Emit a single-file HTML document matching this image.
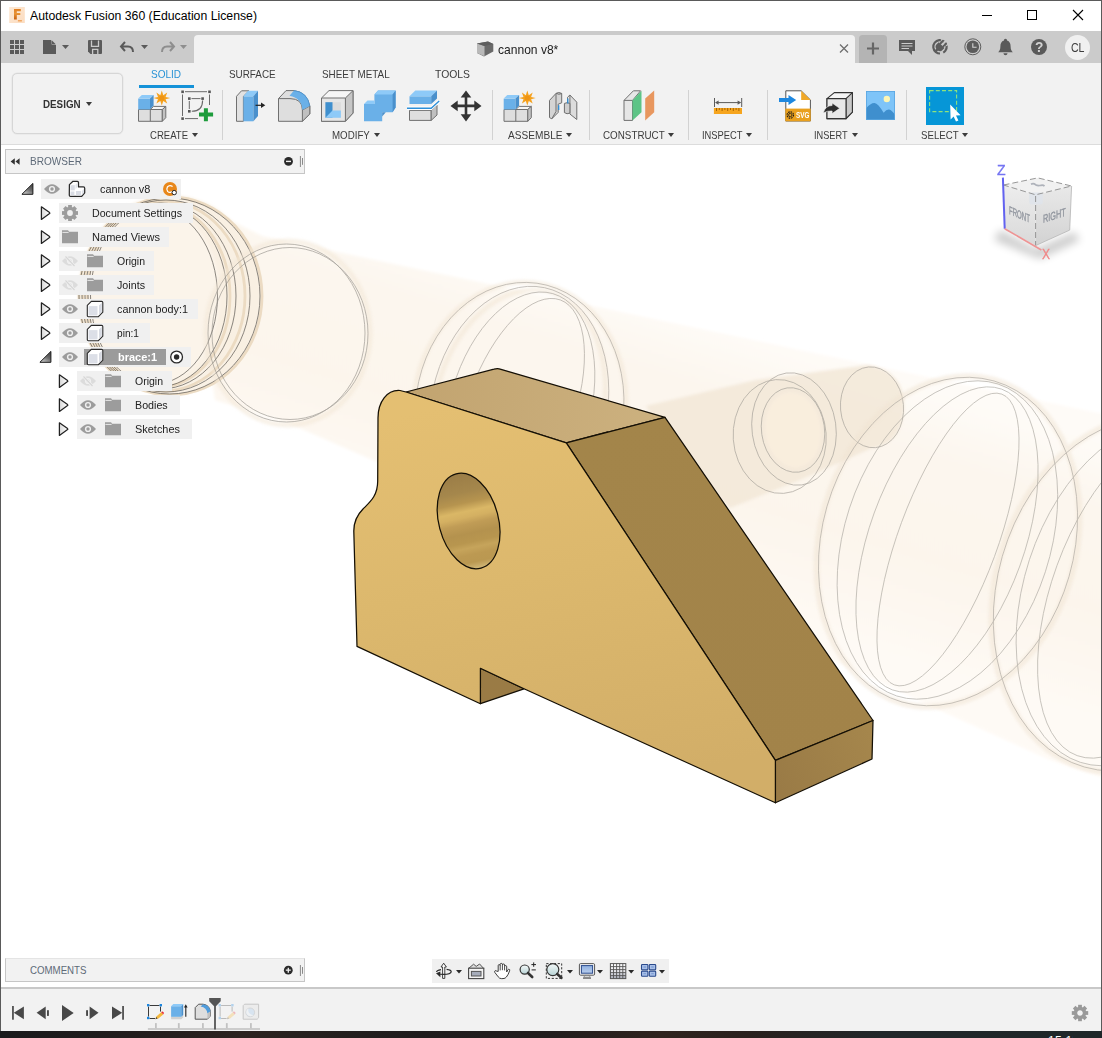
<!DOCTYPE html>
<html><head><meta charset="utf-8"><title>Autodesk Fusion 360</title>
<style>
html,body{margin:0;padding:0;width:1102px;height:1038px;overflow:hidden;background:#fff;}
body{font-family:"Liberation Sans",sans-serif;position:relative;}
.abs{position:absolute;}
.t{position:absolute;white-space:pre;line-height:16px;height:16px;transform-origin:0 50%;font-family:"Liberation Sans",sans-serif;}
svg{position:absolute;overflow:visible;}
.row{position:absolute;height:20px;background:#f0f0f0;}
.sep{position:absolute;width:1px;background:#d2d2d2;top:90px;height:50px;}
.dd{position:absolute;width:0;height:0;border-left:3px solid transparent;border-right:3px solid transparent;border-top:4px solid #3c3c3c;}
</style></head><body>
<!-- title bar -->
<div class="abs" style="left:0;top:0;width:1102px;height:31px;background:#fff;"></div>
<!-- app icon -->
<svg style="left:9px;top:7px" width="16" height="16" viewBox="0 0 16 16">
  <defs><linearGradient id="fi" x1="0" y1="0" x2="1" y2="1"><stop offset="0" stop-color="#fde9d5"/><stop offset="1" stop-color="#fbdcc0"/></linearGradient>
  <linearGradient id="ff" x1="0" y1="0" x2="0" y2="1"><stop offset="0" stop-color="#e07f24"/><stop offset=".45" stop-color="#e99436"/><stop offset="1" stop-color="#c8600f"/></linearGradient></defs>
  <rect x="0.200" y="0" width="15.600" height="16" fill="url(#fi)"/>
  <path d="M5 1.900H11.800V4.300H7.800V5.900H11.300V8.100H7.800V12.400H5Z" fill="url(#ff)"/>
  <rect x="8.900" y="13" width="4" height="1.500" fill="#f2a862"/>
</svg>
<span class="t" style="left:30px;top:7.5px;font-size:12px;font-weight:400;color:#000;transform:scaleX(1.0219);">Autodesk Fusion 360 (Education License)</span>
<!-- window controls -->
<svg style="left:0;top:0" width="1102" height="31" viewBox="0 0 1102 31">
  <path d="M982 15.5H992" stroke="#000" stroke-width="1" fill="none"/>
  <rect x="1027.5" y="10.5" width="9" height="9" stroke="#000" stroke-width="1" fill="none"/>
  <path d="M1073 10L1083 20M1083 10L1073 20" stroke="#000" stroke-width="1.1" fill="none"/>
</svg>
<!-- quick access bar -->
<div class="abs" style="left:0;top:31px;width:1102px;height:32px;background:#cbcbcb;"></div>
<!-- document tab -->
<div class="abs" style="left:194px;top:35px;width:661px;height:28px;background:#f2f2f2;border-radius:4px 4px 0 0;"></div>
<!-- ribbon background -->
<div class="abs" style="left:0;top:63px;width:1102px;height:81px;background:#f2f2f2;"></div>
<div class="abs" style="left:0;top:144px;width:1102px;height:1px;background:#dcdcdc;"></div>
<!-- canvas -->
<div class="abs" style="left:0;top:145px;width:1102px;height:842px;background:#fff;"></div>
<!-- 3D canvas -->
<svg style="left:0;top:0" width="1102" height="1038" viewBox="0 0 1102 1038">
<defs>
  <filter id="soft" x="-5%" y="-5%" width="110%" height="110%"><feGaussianBlur stdDeviation="1.6"/></filter>
  <clipPath id="cv"><rect x="1" y="145" width="1100" height="842"/></clipPath>
  <linearGradient id="gFront" gradientUnits="userSpaceOnUse" x1="470" y1="400" x2="560" y2="800">
    <stop offset="0" stop-color="#e4bf72"/><stop offset=".45" stop-color="#dcb86d"/><stop offset="1" stop-color="#d2ae68"/>
  </linearGradient>
  <linearGradient id="gTop" gradientUnits="userSpaceOnUse" x1="410" y1="400" x2="660" y2="420">
    <stop offset="0" stop-color="#c2a470"/><stop offset="1" stop-color="#ccb17f"/>
  </linearGradient>
  <linearGradient id="gSlope" gradientUnits="userSpaceOnUse" x1="600" y1="430" x2="830" y2="760">
    <stop offset="0" stop-color="#a3854a"/><stop offset="1" stop-color="#a28349"/>
  </linearGradient>
  <linearGradient id="gEnd" gradientUnits="userSpaceOnUse" x1="776" y1="780" x2="873" y2="740">
    <stop offset="0" stop-color="#9a7b46"/><stop offset="1" stop-color="#a5864c"/>
  </linearGradient>
  <linearGradient id="gHole" gradientUnits="userSpaceOnUse" x1="462" y1="473" x2="474.4" y2="568.5" gradientTransform="rotate(10 468.6 521)">
    <stop offset="0" stop-color="#9b7d47"/><stop offset=".2" stop-color="#a5874c"/><stop offset=".31" stop-color="#b6944f"/><stop offset=".4" stop-color="#dab766"/>
    <stop offset=".46" stop-color="#d4b062"/><stop offset=".53" stop-color="#c09c56"/><stop offset=".63" stop-color="#b4924e"/><stop offset=".72" stop-color="#b8964f"/>
    <stop offset=".78" stop-color="#c6a45b"/><stop offset=".85" stop-color="#bc9952"/><stop offset=".93" stop-color="#ba9851"/><stop offset="1" stop-color="#d0b676"/>
  </linearGradient>
  <linearGradient id="gBand" gradientUnits="userSpaceOnUse" x1="640" y1="300" x2="560" y2="560">
    <stop offset="0" stop-color="#fefbf7"/><stop offset=".25" stop-color="#fcf6ee"/><stop offset=".6" stop-color="#fcf5ec"/><stop offset="1" stop-color="#fefaf5"/>
  </linearGradient>
</defs>
<g clip-path="url(#cv)">
  <!-- ghost cannon body band -->
  <g id="ghost">
  <!-- band -->
  <g filter="url(#soft)">
  <path d="M185 197 L262 236 L1110 415.500 L1110 780 L1050 760 L950 715 L850 668 L290 424 L215 400 Z" fill="url(#gBand)"/>
  <!-- muzzle -->
  <ellipse cx="170" cy="295" rx="92" ry="100" fill="#f8eee1" opacity=".85"/>
  <ellipse cx="156" cy="296" rx="64" ry="88" fill="#fbf4ea"/>
  </g>
  <g fill="none" stroke="#ead9bf" stroke-width="2.8" opacity=".9">
    <ellipse cx="170.5" cy="296" rx="91.5" ry="99"/>
    <ellipse cx="164" cy="296" rx="81" ry="95"/>
    <ellipse cx="158.500" cy="296" rx="71.500" ry="91.500"/>
  </g>
  <g fill="none" stroke="#55524d" stroke-width=".8" opacity=".85">
    <ellipse cx="169.5" cy="296" rx="90.5" ry="98"/>
    <ellipse cx="166" cy="296" rx="84" ry="96"/>
    <ellipse cx="160.5" cy="296" rx="75.5" ry="93"/>
    <ellipse cx="157.5" cy="296" rx="69.5" ry="91"/>
    <ellipse cx="154" cy="296" rx="63.5" ry="88"/>
  </g>
  <!-- ring 2 -->
  <ellipse cx="288" cy="333" rx="82" ry="92" fill="none" stroke="#f3e7d6" stroke-width="5" opacity=".55" filter="url(#soft)"/>
  <g fill="none" stroke="#8f8b85" stroke-width=".8" opacity=".75">
    <ellipse cx="286.5" cy="333" rx="78.5" ry="89"/>
    <ellipse cx="290" cy="333.500" rx="78" ry="86"/>
  </g>
  <!-- ring 3 -->
  <g fill="none" stroke="#f1e4d2" stroke-width="5" opacity=".5" filter="url(#soft)">
    <ellipse cx="519.5" cy="408" rx="106" ry="126" transform="rotate(8 519.5 408)"/>
    <ellipse cx="519" cy="408" rx="84" ry="120" transform="rotate(14 519 408)"/>
  </g>
  <g fill="none" stroke="#a29d96" stroke-width=".8" opacity=".7">
    <ellipse cx="519.5" cy="408" rx="104" ry="126" transform="rotate(8 519.5 408)"/>
    <ellipse cx="519" cy="408" rx="88" ry="123" transform="rotate(12 519 408)"/>
    <ellipse cx="520" cy="408" rx="70" ry="119" transform="rotate(16 520 408)"/>
    <ellipse cx="521" cy="408" rx="53" ry="115" transform="rotate(20 521 408)"/>
  </g>
  <!-- pin ghost -->
  <g filter="url(#soft)">
  <path d="M646 406 L756 380 L868 365 Q905 371 904 408 Q902 444 872 448 L800 480 L730 508 L690 470 Z" fill="#f2e7d7" opacity=".85"/>
  <ellipse cx="793" cy="430" rx="28" ry="38" transform="rotate(-8 793 430)" fill="#fdf2df" opacity=".5"/>
  </g>
  <g fill="none" stroke="#a39e97" stroke-width=".8" opacity=".8">
    <ellipse cx="779.7" cy="436.5" rx="46.5" ry="57" transform="rotate(-4 779.7 436.5)"/>
    <ellipse cx="794" cy="429" rx="42" ry="56.5" transform="rotate(-8 794 429)"/>
    <ellipse cx="793" cy="430" rx="31.500" ry="42.500" transform="rotate(-8 793 430)"/>
    <ellipse cx="872" cy="407.3" rx="31.5" ry="40.5" transform="rotate(-5 872 407.3)"/>
  </g>
  <!-- breech rings -->
  <g fill="none" stroke="#f0e3d1" stroke-width="6" opacity=".5" filter="url(#soft)">
    <ellipse cx="948" cy="541.5" rx="128" ry="168" transform="rotate(16 948 541.5)"/>
    <ellipse cx="1134" cy="594" rx="139" ry="181" transform="rotate(16 1134 594)"/>
  </g>
  <g fill="none" stroke="#a6a29b" stroke-width=".8" opacity=".7">
    <ellipse cx="948" cy="541.5" rx="126" ry="167" transform="rotate(16 948 541.5)"/>
    <ellipse cx="947.4" cy="540" rx="103" ry="164" transform="rotate(18 947.4 540)"/>
    <ellipse cx="947" cy="539.5" rx="77.5" ry="160" transform="rotate(20 947 539.5)"/>
    <ellipse cx="948" cy="539.5" rx="49.5" ry="155" transform="rotate(20.3 948 539.5)"/>
    <ellipse cx="1134" cy="594" rx="137" ry="180" transform="rotate(16 1134 594)"/>
    <ellipse cx="1135" cy="594" rx="111" ry="177" transform="rotate(18 1135 594)"/>
    <ellipse cx="1136" cy="594" rx="84" ry="172" transform="rotate(20 1136 594)"/>
  </g>
  </g>
  <!-- BRACE -->
  <g stroke="#140f05" stroke-width="1.25" stroke-linejoin="round">
    <!-- top face -->
    <path d="M406 392 L494 369.2 Q497.5 368.2 501 369.3 L665 417.3 L566.3 442.8 Z" fill="url(#gTop)"/>
    <!-- slope face -->
    <path d="M566.3 442.8 L665 417.3 L873 720.5 L775.4 760.4 Z" fill="url(#gSlope)"/>
    <!-- end face -->
    <path d="M775.4 760.4 L873 720.5 L872 759 L775.4 802.8 Z" fill="url(#gEnd)"/>
    <!-- notch inner -->
    <path d="M480.4 668.3 L524 688.8 L480.4 703.7 Z" fill="#9a7b45"/>
    <!-- front face -->
    <path d="M406 392 L566.3 442.8 L775.4 760.4 L775.4 802.8 L524 688.8 L480.4 668.3 L480.4 703.7 L357 646.4 L353.8 531
             C353.8 521 357.5 514.5 363 509 C370 502 377.7 496 377.7 481 L378 418 C378 402 387 389.5 400 390.5 Z" fill="url(#gFront)"/>
    <!-- hole -->
    <ellipse cx="468.6" cy="521" rx="29.8" ry="48.7" transform="rotate(-14.8 468.6 521)" fill="url(#gHole)"/>
  </g>
</g>
</svg>
<!-- view cube -->
<svg style="left:0;top:0" width="1102" height="300" viewBox="0 0 1102 300">
  <defs>
    <filter id="vb" x="-50%" y="-50%" width="200%" height="200%"><feGaussianBlur stdDeviation="4"/></filter>
    <linearGradient id="vcF" x1="0" y1="0" x2="0" y2="1"><stop offset="0" stop-color="#ededed"/><stop offset="1" stop-color="#d9d9d9"/></linearGradient>
    <linearGradient id="vcR" x1="0" y1="0" x2="0" y2="1"><stop offset="0" stop-color="#e9e9e9"/><stop offset="1" stop-color="#d2d2d2"/></linearGradient>
  </defs>
  <path d="M1000 230L1036 249L1074 232L1080 240L1040 259L994 240Z" fill="#000" opacity=".2" filter="url(#vb)"/>
  <path d="M1003.5 185L1037.8 177.9L1071.6 186L1035.6 194.8Z" fill="#f1f1f1"/>
  <path d="M1003.5 185L1035.6 194.8V245.6L1004.7 228.7Z" fill="url(#vcF)"/>
  <path d="M1035.6 194.8L1071.6 186L1069.7 230.1L1035.6 245.6Z" fill="url(#vcR)"/>
  <rect x="1029.2" y="192.4" width="13.6" height="12" rx="2.5" fill="#dfe3ea" opacity=".9"/>
  <g fill="none" stroke="#8c8c8c" stroke-width=".9" stroke-dasharray="6 3">
    <path d="M1003.5 185L1037.8 177.9L1071.6 186L1035.6 194.8Z"/>
    <path d="M1035.6 196V245.6"/>
  </g>
  <path d="M1071.6 186L1069.7 230.1L1035.6 245.6" fill="none" stroke="#b4b4b4" stroke-width=".8"/>
  <path d="M1031 184.2q2.500-1.400 4.500 .5q2.500 1.500 5.500 .6q2.200-.5 3.500 .9" fill="none" stroke="#aeb2ba" stroke-width="1.7"/>
  <path d="M1002.9 177.6L1004.7 228.7" stroke="#6262f0" stroke-width="2"/>
  <path d="M1004.7 228.7L1041.4 250" stroke="#ee9494" stroke-width="1.6"/>
</svg>
<span class="t" style="left:1008.9px;top:201.5px;font-size:11.5px;color:#8f949d;-webkit-text-stroke:.35px #8f949d;transform-origin:0 50%;transform:matrix(0.528,0.222,0,1,0,0);">FRONT</span>
<span class="t" style="left:1042.8px;top:210.5px;font-size:11.5px;color:#8f949d;-webkit-text-stroke:.35px #8f949d;transform-origin:0 50%;transform:matrix(0.634,-0.203,0,1,0,0);">RIGHT</span>
<span class="t" style="left:997.4px;top:162.2px;font-size:14px;font-weight:400;color:#7474f2;transform:scaleX(1.0044);-webkit-text-stroke:.35px #7474f2;">Z</span>
<span class="t" style="left:1042.2px;top:245.6px;font-size:14px;font-weight:400;color:#f08686;transform:scaleX(0.8562);-webkit-text-stroke:.3px #f08686;">X</span>
<!-- quick access toolbar icons -->
<svg style="left:0;top:31px" width="1102" height="32" viewBox="0 31 1102 32">
  <!-- grid (data panel) -->
  <g fill="#5a5a5a">
    <rect x="10" y="40" width="4" height="4"/><rect x="15" y="40" width="4" height="4"/><rect x="20" y="40" width="4" height="4"/>
    <rect x="10" y="45" width="4" height="4"/><rect x="15" y="45" width="4" height="4"/><rect x="20" y="45" width="4" height="4"/>
    <rect x="10" y="50" width="4" height="4"/><rect x="15" y="50" width="4" height="4"/><rect x="20" y="50" width="4" height="4"/>
  </g>
  <!-- file -->
  <path d="M43 40H51L56 45V54H43Z" fill="#5a5a5a"/><path d="M51.6 39.6V44.4H56.4Z" fill="#cbcbcb"/><path d="M52 40.5L55.5 44H52Z" fill="#5a5a5a"/>
  <path d="M62 45H69L65.5 49Z" fill="#5a5a5a"/>
  <!-- save -->
  <path d="M89 40H101Q102 40 102 41V53Q102 54 101 54H90.5L88 51.5V41Q88 40 89 40Z" fill="#5a5a5a"/>
  <path d="M91.5 40.6V46.3H98.5V40.6" fill="none" stroke="#cbcbcb" stroke-width="1.3"/>
  <path d="M92.6 54V49.3H97.8V54" fill="none" stroke="#cbcbcb" stroke-width="1.3"/>
  <!-- undo -->
  <path d="M125 42L121 46.5L125 51M121.5 46.5H128Q133 46.5 133 52" fill="none" stroke="#5a5a5a" stroke-width="2"/>
  <path d="M141 45H148L144.5 49Z" fill="#5a5a5a"/>
  <!-- redo (disabled) -->
  <path d="M170 42L174 46.5L170 51M173.5 46.5H167Q162 46.5 162 52" fill="none" stroke="#8e8e8e" stroke-width="2"/>
  <path d="M180 45H187L183.5 49Z" fill="#8e8e8e"/>
  <!-- doc tab icon (cube) -->
  <path d="M477 43.5L488 41.5L493.3 44V51.5L484 56.5L477 53Z" fill="#6a6a6a"/>
  <path d="M477 43.5L484.5 46V56.3L477 53Z" fill="#b9b9b9"/>
  <path d="M477 43.5L488 41.5L493.3 44L484.5 46Z" fill="#5e5e5e"/>
  <!-- tab close x -->
  <path d="M840 44.5L848 52.5M848 44.5L840 52.5" stroke="#6e6e6e" stroke-width="1.3" fill="none"/>
  <!-- new tab + -->
  <rect x="859" y="35" width="28" height="28" rx="3.5" fill="#b4b4b4"/><rect x="859" y="55" width="28" height="8" fill="#b4b4b4"/>
  <path d="M867 48.5H879M873 42.5V54.5" stroke="#666" stroke-width="2.2" fill="none"/>
  <!-- comment -->
  <path d="M899 40H915V51H912V55L908 51H899Z" fill="#5a5a5a"/>
  <path d="M901.5 43.5H912.5M901.5 46H912.5M901.5 48.5H909" stroke="#cbcbcb" stroke-width="1" fill="none"/>
  <!-- job status -->
  <circle cx="940" cy="46.8" r="6.7" fill="none" stroke="#5c5c5c" stroke-width="2.2" stroke-dasharray="34 3.4 100" transform="rotate(128 940 46.8)"/>
  <g transform="translate(940.2 46.6) rotate(45)" fill="#5c5c5c">
    <path d="M-4.1 -2H4.1V1.2Q4.1 4.4 0 4.4Q-4.1 4.4 -4.1 1.2Z"/>
    <rect x="-3" y="-6.2" width="1.9" height="4.6"/><rect x="1.1" y="-6.2" width="1.9" height="4.6"/>
    <rect x="-1.3" y="3.6" width="2.6" height="3.6"/>
  </g>
  <g transform="translate(940.2 46.6) rotate(45)" fill="#cbcbcb">
    <rect x="-4.4" y="-8.2" width="1.3" height="3.4"/><rect x="-1" y="-8.6" width="2" height="3.6"/><rect x="3.1" y="-8.2" width="1.3" height="3.4"/>
  </g>
  <!-- clock -->
  <circle cx="972.8" cy="46.8" r="8" fill="none" stroke="#5c5c5c" stroke-width="1"/>
  <circle cx="972.8" cy="46.8" r="6.3" fill="#5c5c5c"/>
  <path d="M972.8 43.2V47.3H976.6" stroke="#d4d4d4" stroke-width="1.1" fill="none"/>
  <!-- bell -->
  <path d="M1005.5 38.8C1006.6 38.8 1007 39.6 1007 40.4C1009.6 41.2 1010.6 43.4 1010.6 46.2C1010.6 49.6 1011.6 51 1012.8 52.2H998.2C999.4 51 1000.4 49.6 1000.4 46.2C1000.4 43.4 1001.4 41.2 1004 40.4C1004 39.6 1004.4 38.8 1005.5 38.8Z" fill="#5a5a5a"/>
  <path d="M1003.5 53.3H1007.5C1007.5 54.6 1006.6 55.3 1005.5 55.3C1004.4 55.3 1003.5 54.6 1003.5 53.3Z" fill="#5a5a5a"/>
  <!-- help -->
  <circle cx="1039" cy="47" r="8" fill="#5a5a5a"/>
  <!-- avatar -->
  <circle cx="1077.5" cy="47.5" r="12.5" fill="#f0f0f0"/>
</svg>
<span class="t" style="left:1034.6px;top:38.9px;font-size:15px;font-weight:700;color:#d2d2d2;transform:scaleX(0.9158);">?</span>
<span class="t" style="left:1071px;top:39.8px;font-size:12px;font-weight:400;color:#3c3c3c;transform:scaleX(0.8798);">CL</span>
<span class="t" style="left:497.5px;top:41.5px;font-size:13px;font-weight:400;color:#222;transform:scaleX(0.9268);">cannon v8*</span>
<!-- ribbon: workspace button, tabs, labels -->
<div class="abs" style="left:12px;top:73px;width:111px;height:61px;border:1px solid #d6d6d6;box-shadow:0 0 0 .5px #e4e4e4;border-radius:5px;box-sizing:border-box;background:#f2f2f2;"></div>
<span class="t" style="left:43.4px;top:96.1px;font-size:11px;font-weight:700;color:#333;transform:scaleX(0.8913);">DESIGN</span>
<div class="dd" style="left:86px;top:102px;"></div>
<span class="t" style="left:151.2px;top:66.1px;font-size:11px;font-weight:400;color:#2a93d5;transform:scaleX(0.9117);">SOLID</span>
<div class="abs" style="left:139px;top:85px;width:55px;height:3px;background:#1592d8;"></div>
<span class="t" style="left:229px;top:66.1px;font-size:11px;font-weight:400;color:#3c3c3c;transform:scaleX(0.8986);">SURFACE</span>
<span class="t" style="left:322px;top:66.1px;font-size:11px;font-weight:400;color:#3c3c3c;transform:scaleX(0.8980);">SHEET METAL</span>
<span class="t" style="left:434.8px;top:66.1px;font-size:11px;font-weight:400;color:#3c3c3c;transform:scaleX(0.9436);">TOOLS</span>
<span class="t" style="left:150.3px;top:126.9px;font-size:11px;font-weight:400;color:#3c3c3c;transform:scaleX(0.8696);">CREATE</span><div class="dd" style="left:192px;top:133px;"></div>
<span class="t" style="left:332.1px;top:126.9px;font-size:11px;font-weight:400;color:#3c3c3c;transform:scaleX(0.8836);">MODIFY</span><div class="dd" style="left:374px;top:133px;"></div>
<span class="t" style="left:508.1px;top:126.9px;font-size:11px;font-weight:400;color:#3c3c3c;transform:scaleX(0.9189);">ASSEMBLE</span><div class="dd" style="left:566px;top:133px;"></div>
<span class="t" style="left:603.4px;top:126.9px;font-size:11px;font-weight:400;color:#3c3c3c;transform:scaleX(0.8934);">CONSTRUCT</span><div class="dd" style="left:668px;top:133px;"></div>
<span class="t" style="left:702.1px;top:126.9px;font-size:11px;font-weight:400;color:#3c3c3c;transform:scaleX(0.8493);">INSPECT</span><div class="dd" style="left:746px;top:133px;"></div>
<span class="t" style="left:814.3px;top:126.9px;font-size:11px;font-weight:400;color:#3c3c3c;transform:scaleX(0.8371);">INSERT</span><div class="dd" style="left:852px;top:133px;"></div>
<span class="t" style="left:921.3px;top:126.9px;font-size:11px;font-weight:400;color:#3c3c3c;transform:scaleX(0.8786);">SELECT</span><div class="dd" style="left:962px;top:133px;"></div>
<div class="sep" style="left:222px"></div><div class="sep" style="left:492px"></div><div class="sep" style="left:589px"></div>
<div class="sep" style="left:688px"></div><div class="sep" style="left:767px"></div><div class="sep" style="left:906px"></div>
<!-- ribbon icons A -->
<svg style="left:0;top:0" width="1102" height="145" viewBox="0 0 1102 145">
<defs>
  <g id="newcomp">
    <!-- gray cubes -->
    <path d="M138.5 109.5H162.3V121.3H138.5Z" fill="#dedede" stroke="#707070" stroke-width="1"/>
    <path d="M150.3 109.5V121.3" stroke="#707070" stroke-width="1"/>
    <path d="M150.3 109.5L153.6 106.4H165.8L162.3 109.5Z" fill="#f6f6f6" stroke="#707070" stroke-width="1" stroke-linejoin="round"/>
    <path d="M162.3 109.5L165.8 106.4V117.7L162.3 121.3Z" fill="#c2c2c2" stroke="#707070" stroke-width="1" stroke-linejoin="round"/>
    <!-- blue cube -->
    <path d="M138.2 98.6H150V109.5H138.2Z" fill="#6ab0e8"/>
    <path d="M138.2 98.6L141.8 95H153.6L150 98.6Z" fill="#8ecaf8"/>
    <path d="M150 98.6L153.6 95V105.5L150 109.5Z" fill="#4a90cc"/>
    <!-- star -->
    <path d="M161.8 90.6L163.3 95.2L167.2 92.6L165.6 96.9L170.2 98L165.6 99.2L167.2 103.4L163.3 100.9L161.8 105.4L160.3 100.9L156.4 103.4L158 99.2L153.4 98L158 96.9L156.4 92.6L160.3 95.2Z" fill="#f5a21f"/>
    <circle cx="161.8" cy="98" r="2.6" fill="#ee9414"/>
  </g>
</defs>
<use href="#newcomp"/>
<use href="#newcomp" x="365.5"/>
<!-- create sketch -->
<g fill="none" stroke="#6a6a6a" stroke-width="1">
  <path d="M185 91.7H207M182.5 94.5V116M209.5 94.5V105M185 118.6H198"/>
  <path d="M191.5 98.6H200.5M189.3 101V109"/>
  <path d="M202.6 100.5Q202.6 111.3 191.8 111.3" stroke-width="1.1"/>
</g>
<g fill="#555">
  <rect x="181.3" y="90.5" width="2.6" height="2.6"/><rect x="208.2" y="90.5" width="2.6" height="2.6"/><rect x="181.3" y="117.3" width="2.6" height="2.6"/>
  <rect x="188" y="97.3" width="2.6" height="2.6"/><rect x="201.3" y="97.3" width="2.6" height="2.6"/><rect x="188" y="110" width="2.6" height="2.6"/>
</g>
<path d="M203.9 108.2H207.9V112.6H213.1V116.6H207.9V121.3H203.9V116.6H199V112.6H203.9Z" fill="#1e9c3c"/>
<!-- press pull -->
<path d="M236.5 96.3L241.5 90.8H249L243.4 96.3V121.3H236.5Z" fill="#e2e2e2" stroke="#707070" stroke-width="1" stroke-linejoin="round"/>
<path d="M243.4 96.3H253.4V121.3H243.4Z" fill="#6ab0e8"/>
<path d="M243.4 96.3L248 90.8H258L253.4 96.3Z" fill="#8ecaf8"/>
<path d="M253.4 96.3L258 90.8V115.9L253.4 121.3Z" fill="#4a90cc"/>
<path d="M255.5 105.3H262" stroke="#222" stroke-width="1.2"/><path d="M261 102.6L265.3 105.3L261 108Z" fill="#222"/>
<!-- fillet -->
<path d="M278.5 98.6L286 90.6H294Q307 92 309.8 106V114L302.4 121.3H278.5Z" fill="#dedede" stroke="#707070" stroke-width="1" stroke-linejoin="round"/>
<path d="M302.4 110L309.8 106V114L302.4 121.3Z" fill="#c0c0c0" stroke="#707070" stroke-width="1" stroke-linejoin="round"/>
<path d="M278.5 98.6H290Q302.4 98.6 302.4 110" fill="none" stroke="#707070" stroke-width="1"/>
<path d="M289.5 95.8L294 90.6Q307.5 92 309.8 106L302.4 110Q301.5 98 289.5 95.8Z" fill="#6ab0e8"/>
<path d="M294 90.6Q307.5 92 309.8 106" fill="none" stroke="#4a90cc" stroke-width=".8"/>
<!-- shell -->
<path d="M321.5 98L329 90.6H353V113.1L345.4 121.3H321.5Z" fill="#f6f6f6" stroke="#707070" stroke-width="1" stroke-linejoin="round"/>
<path d="M345.4 98L353 90.6V113.1L345.4 121.3Z" fill="#c6c6c6" stroke="#707070" stroke-width="1" stroke-linejoin="round"/>
<path d="M321.5 98H345.4V121.3H321.5Z" fill="#e6e6e6" stroke="#707070" stroke-width="1"/>
<path d="M325.4 102.2H340.9V117.7H325.4Z" fill="#dcdcdc"/>
<path d="M325.4 102.2H332.5V117.7H325.4Z" fill="#3f8fce"/>
<path d="M332.5 110.5H340.9V117.7H325.4Z" fill="#8ecaf8"/>
<!-- combine -->
<path d="M374.4 94.4L378 90.4H395.6V107.6L392.6 112.2H382.2V121.3H364V104H374.4Z" fill="#6ab0e8"/>
<path d="M374.4 94.4L378 90.4H395.6L392.6 94.4Z" fill="#8ecaf8"/>
<path d="M364 104L367.5 100.4H374.4V104Z" fill="#8ecaf8"/>
<path d="M392.6 94.4L395.6 90.4V107.6L392.6 112.2Z" fill="#4a90cc"/>
<path d="M382.2 112.2H385.8L382.2 116.5Z" fill="#4a90cc"/>
<path d="M382.2 112.2L385.3 108.4V112.2Z" fill="#4a90cc" opacity="0"/>
<!-- split body -->
<path d="M409.5 96.3H431.2V104H409.5Z" fill="#6ab0e8"/>
<path d="M409.5 96.3L415.3 90.4H437L431.2 96.3Z" fill="#8ecaf8"/>
<path d="M431.2 96.3L437 90.4V98.6L431.2 104Z" fill="#4a90cc"/>
<path d="M409.5 110.4H431.2V120.4H409.5Z" fill="#dedede" stroke="#707070" stroke-width="1"/>
<path d="M431.2 110.4L437 105V115L431.2 120.4Z" fill="#c0c0c0" stroke="#707070" stroke-width="1" stroke-linejoin="round"/>
<path d="M407 108.2H431.2L439.2 101" fill="none" stroke="#fff" stroke-width="3.4"/>
<path d="M407 108.2H431.2L439.2 101" fill="none" stroke="#2e8fd8" stroke-width="1.4"/>
<!-- move -->
<path d="M466 90.4L471.3 97.6H467.3V104.6H474.3V100.6L481.5 105.9L474.3 111.2V107.2H467.3V114.2H471.3L466 121.4L460.7 114.2H464.7V107.2H457.7V111.2L450.5 105.9L457.7 100.6V104.6H464.7V97.6H460.7Z" fill="#333"/>
</svg>
<!-- ribbon icons B -->
<svg style="left:0;top:0" width="1102" height="145" viewBox="0 0 1102 145">
<!-- joint -->
<g stroke="#6e6e6e" stroke-width="1" stroke-linejoin="round">
  <path d="M549.5 100.4L556 93.4Q558.8 91.6 561.7 93.4V102.8L558.2 104.2V112.4L551.8 118.8L549.5 117.6Z" fill="#d4d4d4"/>
  <path d="M556 93.4V111.5L551.8 118.8" fill="none"/>
  <path d="M556.3 93.4Q558.8 95 561.6 93.6" fill="none"/>
  <path d="M569.9 95L576.8 102.2V119.5L569.9 114Z" fill="#dcdcdc"/>
  <path d="M564.4 103.4Q567 102 569.9 103.4V113.1Q567 114.6 564.4 112.6Z" fill="#cfcfcf"/>
  <path d="M569.9 95L567.6 97.2V103" fill="none"/>
</g>
<path d="M558.7 105.2V110M567.8 98.4V103.6" stroke="#2e8fd8" stroke-width="1.3"/>
<!-- construct: offset plane -->
<path d="M624 100.4L633.4 90.8H640.6L632.5 100.4V120.4H624Z" fill="#e6e6e6" stroke="#707070" stroke-width="1" stroke-linejoin="round"/>
<path d="M624 100.4H632.5" stroke="#707070" stroke-width="1"/>
<path d="M632.5 100.4L641.5 90.8V112.2L632.5 120.4Z" fill="#5dc486"/>
<path d="M645.2 98.6L654.2 90.4V112.2L645.2 120.4Z" fill="#e8975f"/>
<!-- inspect: measure -->
<path d="M714.5 98V107M741.7 98V107M716 102.6H740" stroke="#5a5a5a" stroke-width="1" fill="none"/>
<path d="M715 102.6L718.6 100.4V104.8ZM741.2 102.6L737.6 100.4V104.8Z" fill="#5a5a5a"/>
<rect x="713.9" y="108" width="28.1" height="6" fill="#f6a51e"/>
<path d="M716.5 108V111M719.3 108V110M722.1 108V111M724.9 108V110M727.7 108V111M730.5 108V110M733.3 108V111M736.1 108V110M738.9 108V111" stroke="#a86400" stroke-width="1"/>
<!-- insert svg -->
<path d="M785.8 90.8H801.2L810.4 99.9V121H785.8Z" fill="#fff" stroke="#555" stroke-width="1"/>
<path d="M801.2 90.8L810.7 99.9H801.2Z" fill="#f0a828"/>
<rect x="785.3" y="108.6" width="25.4" height="12.7" fill="#e9a01e"/>
<path d="M779 97.9H788.5V95L796.2 99.9L788.5 104.9V101.9H779Z" fill="#1e88e0"/>
<circle cx="790.3" cy="115" r="3.2" fill="none" stroke="#1a1a1a" stroke-width="1.1" stroke-dasharray="1.6 .9"/>
<circle cx="790.3" cy="115" r="1.7" fill="none" stroke="#1a1a1a" stroke-width=".8"/>
<!-- insert derive -->
<path d="M827 98.6L834.3 92.6H852.4V112.2L846 118.6H827Z" fill="#f4f4f4" stroke="#333" stroke-width="1.1" stroke-linejoin="round"/>
<path d="M846 98.6L852.4 92.6V112.2L846 118.6Z" fill="#c9c9c9" stroke="#333" stroke-width="1.1" stroke-linejoin="round"/>
<path d="M827 98.6H846V118.6H827Z" fill="#e8e8e8" stroke="#333" stroke-width="1.1"/>
<path d="M823.3 113Q825.4 105.4 832.1 105.5V103L839.7 108.3L832.1 113.6V111Q827 110.6 823.3 113Z" fill="#2e2e2e" stroke="#f2f2f2" stroke-width=".6"/>
<!-- insert image -->
<rect x="866" y="91" width="29" height="29" fill="#7ec4f8"/>
<path d="M866 108.6Q870.5 103 874.5 103.1Q878 103.4 883.6 112.8Q886.5 109.2 889 109.5Q892 110 895 115V120H866Z" fill="#3f8fce"/>
<circle cx="886.8" cy="99" r="3.2" fill="#fdf6b4"/>
<rect x="866.4" y="91.4" width="28.2" height="28.2" fill="none" stroke="#5aa6e0" stroke-width=".8"/>
<!-- select -->
<rect x="926" y="87" width="38" height="38" fill="#0696d7"/>
<rect x="929.6" y="90.6" width="27" height="21" fill="none" stroke="#8fe27c" stroke-width="1.1" stroke-dasharray="4 2.2"/>
<path d="M950.2 104.4L950.6 119.4L953.6 116.4L956 121.6L958.4 120.5L956 115.4L960.6 115.2Z" fill="#fff"/>
</svg>
<span class="t" style="left:796.2px;top:107.2px;font-size:8.5px;font-weight:700;color:#fff;transform:scaleX(0.7464);">SVG</span>
<!-- browser panel -->
<div class="abs" style="left:5px;top:149px;width:300px;height:25px;box-sizing:border-box;background:#f2f2f2;border:1px solid #c6c6c6;"></div>
<span class="t" style="left:30px;top:153.3px;font-size:11px;font-weight:400;color:#5e6a78;transform:scaleX(0.9148);">BROWSER</span>
<div class="row" style="left:41px;top:179px;width:140px;"></div>
<div class="row" style="left:59px;top:203px;width:133.5px;"></div>
<div class="row" style="left:59px;top:227px;width:110px;"></div>
<div class="row" style="left:59px;top:251px;width:95px;"></div>
<div class="row" style="left:59px;top:275px;width:95px;"></div>
<div class="row" style="left:59px;top:299px;width:139px;"></div>
<div class="row" style="left:59px;top:323px;width:91px;"></div>
<div class="row" style="left:59px;top:347px;width:132px;"></div>
<div class="row" style="left:77px;top:371px;width:95px;"></div>
<div class="row" style="left:77px;top:395px;width:103px;"></div>
<div class="row" style="left:77px;top:419px;width:115px;"></div>
<div class="abs" style="left:84px;top:349px;width:82px;height:16px;background:#9b9b9b;"></div>
<svg style="left:0;top:0" width="320" height="450" viewBox="0 0 320 450">
<defs>
  <linearGradient id="trg" x1="1" y1="0" x2=".35" y2="1"><stop offset="0" stop-color="#3a3a3a"/><stop offset=".55" stop-color="#6e6e6e"/><stop offset="1" stop-color="#c4c4c4"/></linearGradient><linearGradient id="tro" x1="0" y1="0" x2="1" y2="0"><stop offset="0" stop-color="#d8d8d8"/><stop offset="1" stop-color="#ffffff"/></linearGradient>
  <g id="eye"><path d="M0 0Q8 -9.4 16 0Q8 9.4 0 0Z" fill="#9c9c9c"/><circle cx="8" cy="0" r="3.1" fill="#f0f0f0"/><circle cx="8" cy="0" r="1.7" fill="#9c9c9c"/></g>
  <g id="eyeh"><path d="M0 0Q8 -9.4 16 0Q8 9.4 0 0Z" fill="#dcdcdc"/><circle cx="8" cy="0" r="3.1" fill="#f0f0f0"/><circle cx="8" cy="0" r="1.7" fill="#dcdcdc"/><path d="M3.5 -4.5L12.5 5" stroke="#f0f0f0" stroke-width="2.6"/><path d="M3.5 -4.5L12.5 5" stroke="#d6d6d6" stroke-width="1.1"/></g>
  <g id="folder"><path d="M0 -6.8H6L7.2 -5.2H16V6.2H0Z" fill="#9c9c9c"/><path d="M0.4 -4.6H6.6" stroke="#f0f0f0" stroke-width=".9"/></g>
  <g id="gear"><path id="gt" d="M-1.9 -8H1.9V-4.5H-1.9Z" fill="#9c9c9c"/><use href="#gt" transform="rotate(45)"/><use href="#gt" transform="rotate(90)"/><use href="#gt" transform="rotate(135)"/><use href="#gt" transform="rotate(180)"/><use href="#gt" transform="rotate(225)"/><use href="#gt" transform="rotate(270)"/><use href="#gt" transform="rotate(315)"/><circle r="4.6" fill="none" stroke="#9c9c9c" stroke-width="3.4"/></g>
  <g id="cube"><path d="M0.3 -3.6L4.3 -7.6H14.6Q15.8 -7.6 15.8 -6.4V3.2L11.4 7.7H1.5Q0.3 7.7 0.3 6.5Z" fill="#fff" stroke="#2a2a2a" stroke-width="1.1" stroke-linejoin="round"/><path d="M1.6 -2.9H10.5V6.4H1.6Z" fill="#dcdfe7"/><path d="M12 -3.4L14.8 -6.2V2.8L12 5.8Z" fill="#d7dae2"/></g>
  <g id="comp"><path d="M0.4 -4.4L4 -7.7H8.4Q9.5 -7.7 9.5 -6.6V-2.1H14.4Q15.7 -2.1 15.7 -0.8V3.8L12.7 7.4H1.5Q0.3 7.4 0.3 6.2Z" fill="#fff" stroke="#2a2a2a" stroke-width="1.25" stroke-linejoin="round"/><path d="M1.5 -3.8H5.8V1.4H1.5Z" fill="#d9dce4"/><path d="M1.5 2.5H5.4V6.4H1.5Z" fill="#d9dce4"/><path d="M6.9 2H12.1V6.400H6.900Z" fill="#d9dce4"/><path d="M6.5 -4L8.500 -6.400V-2.300L6.500 0.500Z" fill="#e2e5eb"/><path d="M13.1 2L14.900 -0.200V3.700L13.100 6Z" fill="#dcdfe6"/></g>
</defs>
<path d="M14.8 158.2V164.8L10.6 161.5ZM19.6 158.2V164.8L15.4 161.5Z" fill="#333"/>
<circle cx="288.5" cy="161.4" r="4.4" fill="#2a2a2a"/><path d="M286 161.4H291" stroke="#f2f2f2" stroke-width="1.4"/>
<path d="M300.4 156V167M302.5 158V164.8" stroke="#8a8a8a" stroke-width="1"/>
<path d="M32.9 183.4V194.3H21.9Z" fill="url(#trg)" stroke="#1a1a1a" stroke-width="1" stroke-linejoin="round"/>
<use href="#eye" x="44" y="189"/>
<use href="#comp" x="69" y="189"/>
<path d="M41.4 206.8L49.6 212.6Q50.1 213.1 49.6 213.6L41.4 219.4Z" fill="url(#tro)" stroke="#222" stroke-width="1.25" stroke-linejoin="round"/>
<use href="#gear" x="70" y="213"/>
<path d="M41.4 230.8L49.6 236.6Q50.1 237.1 49.6 237.6L41.4 243.4Z" fill="url(#tro)" stroke="#222" stroke-width="1.25" stroke-linejoin="round"/>
<use href="#folder" x="62" y="237"/>
<path d="M41.4 254.8L49.6 260.6Q50.1 261.1 49.6 261.6L41.4 267.4Z" fill="url(#tro)" stroke="#222" stroke-width="1.25" stroke-linejoin="round"/>
<use href="#eyeh" x="62" y="261"/>
<use href="#folder" x="87" y="261"/>
<path d="M41.4 278.8L49.6 284.6Q50.1 285.1 49.6 285.6L41.4 291.4Z" fill="url(#tro)" stroke="#222" stroke-width="1.25" stroke-linejoin="round"/>
<use href="#eyeh" x="62" y="285"/>
<use href="#folder" x="87" y="285"/>
<path d="M41.4 302.8L49.6 308.6Q50.1 309.1 49.6 309.6L41.4 315.4Z" fill="url(#tro)" stroke="#222" stroke-width="1.25" stroke-linejoin="round"/>
<use href="#eye" x="62" y="309"/>
<use href="#cube" x="87" y="309"/>
<path d="M41.4 326.8L49.6 332.6Q50.1 333.1 49.6 333.6L41.4 339.4Z" fill="url(#tro)" stroke="#222" stroke-width="1.25" stroke-linejoin="round"/>
<use href="#eye" x="62" y="333"/>
<use href="#cube" x="87" y="333"/>
<path d="M50.9 351.4V362.3H39.9Z" fill="url(#trg)" stroke="#1a1a1a" stroke-width="1" stroke-linejoin="round"/>
<use href="#eye" x="62" y="357"/>
<use href="#cube" x="87" y="357"/>
<path d="M59.4 374.8L67.6 380.6Q68.1 381.1 67.6 381.6L59.4 387.4Z" fill="url(#tro)" stroke="#222" stroke-width="1.25" stroke-linejoin="round"/>
<use href="#eyeh" x="80" y="381"/>
<use href="#folder" x="105" y="381"/>
<path d="M59.4 398.8L67.6 404.6Q68.1 405.1 67.6 405.6L59.4 411.4Z" fill="url(#tro)" stroke="#222" stroke-width="1.25" stroke-linejoin="round"/>
<use href="#eye" x="80" y="405"/>
<use href="#folder" x="105" y="405"/>
<path d="M59.4 422.8L67.6 428.6Q68.1 429.1 67.6 429.6L59.4 435.4Z" fill="url(#tro)" stroke="#222" stroke-width="1.25" stroke-linejoin="round"/>
<use href="#eye" x="80" y="429"/>
<use href="#folder" x="105" y="429"/>
<circle cx="170" cy="189" r="7" fill="#e8871a"/><path d="M172.6 186.6Q169.6 184.4 167.4 187Q166 189.4 167.6 191.4Q169.6 193.4 172.4 191.6" fill="none" stroke="#fff" stroke-width="1.3"/><circle cx="174.2" cy="192.6" r="2.2" fill="#fff" stroke="#222" stroke-width="1"/>
<circle cx="176.6" cy="357" r="5.9" fill="#fff" stroke="#2a2a2a" stroke-width="1.3"/><circle cx="176.6" cy="357" r="2.7" fill="#2a2a2a"/>
</svg>
<span class="t" style="left:99.6px;top:181.2px;font-size:11px;font-weight:400;color:#222;transform:scaleX(0.9928);">cannon v8</span>
<span class="t" style="left:92px;top:205.2px;font-size:11px;font-weight:400;color:#222;transform:scaleX(0.9684);">Document Settings</span>
<span class="t" style="left:92px;top:229.2px;font-size:11px;font-weight:400;color:#222;transform:scaleX(1.0048);">Named Views</span>
<span class="t" style="left:117px;top:253.2px;font-size:11px;font-weight:400;color:#222;transform:scaleX(0.9542);">Origin</span>
<span class="t" style="left:117px;top:277.2px;font-size:11px;font-weight:400;color:#222;transform:scaleX(0.9739);">Joints</span>
<span class="t" style="left:117px;top:301.2px;font-size:11px;font-weight:400;color:#222;transform:scaleX(0.9838);">cannon body:1</span>
<span class="t" style="left:117px;top:325.2px;font-size:11px;font-weight:400;color:#222;transform:scaleX(0.9221);">pin:1</span>
<span class="t" style="left:117.5px;top:349.2px;font-size:11px;font-weight:700;color:#fff;transform:scaleX(0.9964);">brace:1</span>
<span class="t" style="left:135px;top:373.2px;font-size:11px;font-weight:400;color:#222;transform:scaleX(0.9542);">Origin</span>
<span class="t" style="left:135px;top:397.2px;font-size:11px;font-weight:400;color:#222;transform:scaleX(0.9720);">Bodies</span>
<span class="t" style="left:135px;top:421.2px;font-size:11px;font-weight:400;color:#222;transform:scaleX(0.9945);">Sketches</span>
<!-- comments panel -->
<div class="abs" style="left:5px;top:958px;width:300px;height:24px;box-sizing:border-box;background:#f2f2f2;border:1px solid #c6c6c6;border-top-color:#e4e4e4;"></div>
<span class="t" style="left:30.2px;top:962.2px;font-size:11px;font-weight:400;color:#5e6a78;transform:scaleX(0.8804);">COMMENTS</span>
<!-- nav bar -->
<div class="abs" style="left:432px;top:959px;width:237px;height:24px;background:#f0f0f0;"></div>
<svg style="left:0;top:950px" width="1102" height="40" viewBox="0 950 1102 40">
  <defs>
    <linearGradient id="lens" x1="0" y1="0" x2="0" y2="1"><stop offset="0" stop-color="#f4f8f8"/><stop offset="1" stop-color="#b8d4d6"/></linearGradient>
    <linearGradient id="scr" x1="0" y1="0" x2="0" y2="1"><stop offset="0" stop-color="#8fb0e0"/><stop offset="1" stop-color="#b8cdec"/></linearGradient>
    <linearGradient id="grd" x1="0" y1="0" x2="0" y2="1"><stop offset="0" stop-color="#ffffff"/><stop offset=".5" stop-color="#e8e8ec"/><stop offset="1" stop-color="#a8acb8"/></linearGradient>
  </defs>
  <!-- comments icons -->
  <circle cx="288.3" cy="970.2" r="4.4" fill="#2a2a2a"/><path d="M285.8 970.2H290.8M288.3 967.7V972.7" stroke="#f2f2f2" stroke-width="1.3"/>
  <path d="M300.4 965V976M302.5 967V973.8" stroke="#8a8a8a" stroke-width="1"/>
  <!-- orbit -->
  <path d="M443.7 963.2L446.4 967H444.8V978.4H442.6V967H441Z" fill="#fff" stroke="#2a2a2a" stroke-width=".9" stroke-linejoin="round"/>
  <path d="M446.6 969.4Q451.4 970 451.2 971.8Q450.6 974.2 443.6 974.4Q440 974.4 438.4 974" fill="none" stroke="#2a2a2a" stroke-width="1.2"/>
  <path d="M441 969.6Q436.6 970.4 436.6 972" fill="none" stroke="#2a2a2a" stroke-width="1.2"/>
  <path d="M436 973.2L440.4 971.4L440.4 977.2Z" fill="#2a2a2a"/>
  <path d="M456 970H462L459 973.4Z" fill="#2a2a2a"/>
  <!-- look at -->
  <path d="M468.6 968.4L473.6 964.2L476.2 966.4L479.6 964L483.6 968.4" fill="#ddd" stroke="#555" stroke-width="1"/>
  <rect x="468.6" y="968.2" width="15.2" height="10.4" fill="#f4f4f4" stroke="#444" stroke-width="1.1"/>
  <rect x="471.4" y="971.4" width="9.6" height="4.6" fill="#a6acba" stroke="#555" stroke-width="1"/>
  <!-- pan hand -->
  <path d="M498.2 971.4V965.6Q498.2 964.6 499.2 964.6Q500.2 964.6 500.2 965.6V964.4Q500.2 963.4 501.3 963.4Q502.4 963.4 502.4 964.4V965Q502.4 964 503.5 964Q504.6 964 504.6 965V966.4Q504.6 965.6 505.6 965.6Q506.7 965.6 506.7 966.8V972Q507.6 969.4 508.8 969.2Q510.2 969.4 509.6 970.8Q508.4 974.6 506.4 977Q505.4 978.6 503 978.6H501.4Q499.4 978.6 498.2 976.8L494.8 972.4Q494.2 971.4 495 970.8Q496 970.4 496.8 971.2Z" fill="#fff" stroke="#333" stroke-width=".95" stroke-linejoin="round"/>
  <path d="M500.2 965.6V970.4M502.4 965V970.2M504.6 966.4V970.4" stroke="#333" stroke-width=".9" fill="none"/>
  <!-- zoom -->
  <circle cx="524.7" cy="969.6" r="4.6" fill="url(#lens)" stroke="#333" stroke-width="1.2"/>
  <path d="M528 973L532.2 977" stroke="#333" stroke-width="2.6" stroke-linecap="round"/>
  <path d="M531.4 964.6H536M533.7 962.4V966.8M531.6 969.9H535.8" stroke="#222" stroke-width="1" fill="none"/>
  <!-- zoom window -->
  <rect x="546.3" y="963.6" width="15.4" height="14.8" fill="none" stroke="#333" stroke-width="1" stroke-dasharray="2.2 1.6"/>
  <circle cx="552.8" cy="969.6" r="6" fill="url(#lens)" stroke="#333" stroke-width="1.2"/>
  <path d="M557.2 974L561.4 977.8" stroke="#333" stroke-width="2.6" stroke-linecap="round"/>
  <path d="M567 970H573L570 973.4Z" fill="#2a2a2a"/>
  <!-- display settings -->
  <rect x="579.4" y="963.6" width="15.2" height="11.6" rx="1.2" fill="#f4f4f4" stroke="#555" stroke-width="1"/>
  <rect x="581.4" y="965.6" width="11.2" height="7.6" fill="url(#scr)" stroke="#2a4a8c" stroke-width="1"/>
  <path d="M585 975.4H589L590.4 977.4H583.6Z" fill="#ddd" stroke="#666" stroke-width=".6"/>
  <path d="M583 978.2H591" stroke="#666" stroke-width="1.1"/>
  <path d="M597 970H603L600 973.4Z" fill="#2a2a2a"/>
  <!-- grid -->
  <rect x="610.4" y="963.6" width="15.4" height="15" fill="url(#grd)" stroke="#555" stroke-width="1"/>
  <path d="M613.5 963.6V978.6M616.6 963.6V978.6M619.7 963.6V978.6M622.8 963.6V978.6M610.4 966.6H625.8M610.4 969.6H625.8M610.4 972.6H625.8M610.4 975.6H625.8" stroke="#555" stroke-width=".9" fill="none"/>
  <path d="M628.2 970H634.2L631.2 973.4Z" fill="#2a2a2a"/>
  <!-- viewports -->
  <g fill="#a9c0e8" stroke="#2a4a8c" stroke-width="1.1">
    <rect x="641.5" y="964.5" width="6.4" height="5.2" rx=".8"/><rect x="649.3" y="964.5" width="6.4" height="5.2" rx=".8"/>
    <rect x="641.5" y="971.1" width="6.4" height="5.2" rx=".8"/><rect x="649.3" y="971.1" width="6.4" height="5.2" rx=".8"/>
  </g>
  <path d="M643.4 967H646M651.2 967H653.8M643.4 973.6H646M651.2 973.6H653.8" stroke="#7f9fd6" stroke-width="1.4"/>
  <path d="M659 970H665L662 973.4Z" fill="#2a2a2a"/>
</svg>
<!-- timeline (drawn above 90_bottom backgrounds via z-index) -->
<svg style="left:0;top:989px;z-index:5" width="1102" height="42" viewBox="0 989 1102 42">
  <g fill="#484848">
    <rect x="12.1" y="1006" width="1.7" height="13.7"/><path d="M13.8 1012.8L23.9 1006.5V1019.3Z"/>
    <path d="M36.6 1012.8L45.7 1006.5V1019.3Z"/><rect x="47" y="1010.2" width="1.9" height="5.7"/>
    <path d="M62 1005V1021L73.7 1013Z"/>
    <rect x="86.1" y="1010.2" width="1.9" height="5.7"/><path d="M98.5 1012.8L89.6 1006.5V1019.3Z"/>
    <path d="M122.2 1012.8L112 1006.5V1019.3Z"/><rect x="122.2" y="1006" width="1.7" height="13.7"/>
  </g>
  <!-- baseline + ticks -->
  <rect x="147.9" y="1028.2" width="112.1" height="1.6" fill="#c2c2c2"/>
  <g fill="#c2c2c2"><rect x="155" y="1023.1" width="1.8" height="5.2"/><rect x="177.9" y="1023.1" width="1.8" height="5.2"/><rect x="202" y="1023.1" width="1.8" height="5.2"/><rect x="225.9" y="1023.1" width="1.8" height="5.2"/><rect x="250" y="1023.1" width="1.8" height="5.2"/></g>
  <defs>
    <g id="tlsk">
      <path d="M149.5 1005.5H159.5M148.5 1006.6V1016.6M160.5 1006.6V1011.6M149.5 1018.5H155" stroke="#3a3a3a" stroke-width="1" fill="none"/>
      <g fill="#1e88e0"><rect x="147" y="1004" width="2.4" height="2.4"/><rect x="159.6" y="1004" width="2.4" height="2.4"/><rect x="147" y="1016.8" width="2.4" height="2.4"/></g>
      <path d="M155.4 1019.2L156.4 1016.4L161.2 1012.2L163.2 1014.4L158.4 1018.6Z" fill="#f5b83d"/>
      <path d="M161.2 1012.2L162 1011.5Q163.4 1011.2 164 1013L163.2 1014.4Z" fill="#e8303a"/>
      <path d="M155.4 1019.2L156.2 1016.9L157.6 1018.4Z" fill="#444"/>
    </g>
  </defs>
  <use href="#tlsk"/>
  <!-- extrude -->
  <path d="M171.1 1016.8H181.3L183.2 1014.9V1017.4L181.3 1019.3H171.1Z" fill="#d0d0d0"/>
  <path d="M171.1 1006.2H181.3V1016.8H171.1Z" fill="#6ab0e8"/>
  <path d="M171.1 1006.2L173.3 1004H183.2L181.3 1006.2Z" fill="#8ecaf8"/>
  <path d="M181.3 1006.2L183.2 1004V1014.9L181.3 1016.8Z" fill="#4a90cc"/>
  <path d="M185.8 1006.5V1016.8" stroke="#222" stroke-width="1.1"/><path d="M185.8 1004.2L187.6 1007.4H184Z" fill="#222"/>
  <!-- fillet -->
  <path d="M195.2 1007.6L198.6 1004.2H203Q209.6 1005 210.4 1011.6V1016L207.4 1019.2H195.2Z" fill="#dedede" stroke="#555" stroke-width="1" stroke-linejoin="round"/>
  <path d="M200.6 1006.6L203 1004.2Q209.6 1005 210.4 1011.6L207.4 1013.6Q206.8 1007.6 200.6 1006.6Z" fill="#4f9cdc"/>
  <path d="M207.4 1013.6L210.4 1011.6V1016L207.4 1019.2Z" fill="#c0c0c0"/>
  <!-- marker -->
  <path d="M209.2 998.1H220.7V1001.2L215.9 1006.2V1029.6H214.1V1006.2L209.2 1001.2Z" fill="#555"/>
  <!-- faded sketch -->
  <use href="#tlsk" x="71.6" opacity=".3"/>
  <!-- faded hole -->
  <g opacity=".3">
    <path d="M243.2 1005.6L244.6 1004.2H258.6V1017.8L257.2 1019.2H243.2Z" fill="#dedede" stroke="#666" stroke-width="1" stroke-linejoin="round"/>
    <circle cx="250.2" cy="1012.4" r="4.4" fill="#9cc4ea" stroke="#888" stroke-width=".8"/>
    <path d="M248.4 1008.6Q247.2 1014 253.4 1015.4Q249 1017.4 246.6 1014Q245.4 1010.6 248.4 1008.6Z" fill="#e8eef6"/>
  </g>
  <!-- settings gear -->
  <g transform="translate(1080 1013)" fill="#9a9a9a">
    <path id="g2" d="M-1.9 -8.2H1.9V-4.5H-1.9Z"/><use href="#g2" transform="rotate(45)"/><use href="#g2" transform="rotate(90)"/><use href="#g2" transform="rotate(135)"/><use href="#g2" transform="rotate(180)"/><use href="#g2" transform="rotate(225)"/><use href="#g2" transform="rotate(270)"/><use href="#g2" transform="rotate(315)"/>
    <circle r="4.5" fill="none" stroke="#9a9a9a" stroke-width="3.4"/>
  </g>
</svg>
<!-- timeline bar -->
<div class="abs" style="left:0;top:987px;width:1102px;height:2px;background:#c8c8c8;"></div>
<div class="abs" style="left:0;top:989px;width:1102px;height:42px;background:#f2f2f2;"></div>
<!-- taskbar strip -->
<div class="abs" style="left:0;top:1031px;width:1102px;height:7px;background:linear-gradient(90deg,#1a1a1c 0%,#221d1d 12%,#2c2320 22%,#1f1c1d 38%,#231e1e 50%,#30241f 60%,#2a211e 68%,#22272a 80%,#1f2729 100%);"></div>
<div class="abs" style="left:1048px;top:1036px;width:25px;height:2px;overflow:hidden;"><span style="position:absolute;left:0;top:-1px;font:12px/12px 'Liberation Sans',sans-serif;color:#fff;letter-spacing:.3px;">15:15</span></div>
<!-- window border -->
<div class="abs" style="left:0;top:0;width:1px;height:1031px;background:#5a5a5a;"></div>
<div class="abs" style="left:1101px;top:0;width:1px;height:1031px;background:#5a5a5a;"></div>
<div class="abs" style="left:0;top:0;width:1102px;height:1px;background:#5a5a5a;"></div>
</body></html>
